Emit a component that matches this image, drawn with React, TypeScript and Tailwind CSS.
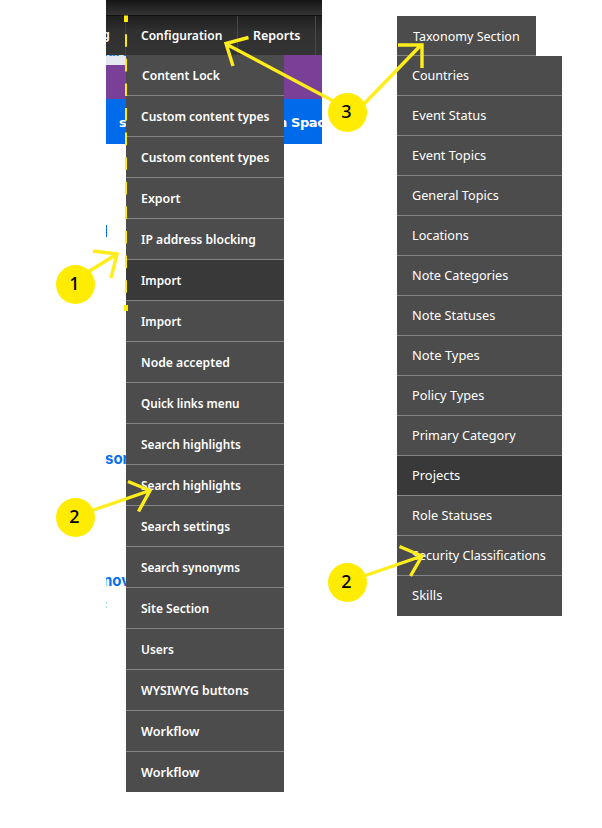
import { useLayoutEffect, useRef, useState } from "react";

type Item = { label: string; width: number; active?: boolean };

const configuration: Item[] = [
  { label: "Content Lock", width: 78 },
  { label: "Custom content types", width: 128 },
  { label: "Custom content types", width: 128 },
  { label: "Export", width: 40 },
  { label: "IP address blocking", width: 114.5 },
  { label: "Import", width: 40, active: true },
  { label: "Import", width: 40 },
  { label: "Node accepted", width: 89 },
  { label: "Quick links menu", width: 99 },
  { label: "Search highlights", width: 100 },
  { label: "Search highlights", width: 100 },
  { label: "Search settings", width: 89 },
  { label: "Search synonyms", width: 99 },
  { label: "Site Section", width: 68.5 },
  { label: "Users", width: 33 },
  { label: "WYSIWYG buttons", width: 108 },
  { label: "Workflow", width: 59 },
  { label: "Workflow", width: 59 },
];

const taxonomy: Item[] = [
  { label: "Countries", width: 57 },
  { label: "Event Status", width: 74 },
  { label: "Event Topics", width: 74 },
  { label: "General Topics", width: 86.5 },
  { label: "Locations", width: 56.5 },
  { label: "Note Categories", width: 96.5 },
  { label: "Note Statuses", width: 83.5 },
  { label: "Note Types", width: 67.5 },
  { label: "Policy Types", width: 72.5 },
  { label: "Primary Category", width: 104 },
  { label: "Projects", width: 48.5, active: true },
  { label: "Role Statuses", width: 80.5 },
  { label: "Security Classifications", width: 133.5 },
  { label: "Skills", width: 30 },
];

// A single-line label whose glyphs are condensed or widened to its given width.
function Label({ text, width }: { text: string; width: number }) {
  const ref = useRef<HTMLSpanElement>(null);
  const [scale, setScale] = useState(1);
  useLayoutEffect(() => {
    if (ref.current) setScale(width / ref.current.offsetWidth);
  }, [width]);
  return (
    <span
      ref={ref}
      className="inline-block origin-left whitespace-nowrap"
      style={{ transform: `scaleX(${scale})` }}
    >
      {text}
    </span>
  );
}

function Badge({ n, place }: { n: number; place: string }) {
  return (
    <div
      className={`absolute flex h-[39px] w-[39px] items-center justify-center rounded-full bg-[#ffec00] pr-0.5 pb-[3px] font-['Noto_Sans','Open_Sans',sans-serif] text-[18px] leading-none font-medium text-black ${place}`}
    >
      {n}
    </div>
  );
}

export default function App() {
  return (
    <div className="relative flex h-[828px] w-[602px] items-start overflow-hidden bg-white pl-[106px] font-['Noto_Sans','Open_Sans',sans-serif] text-[13px] text-white">
      <section className="w-[216px] shrink-0 overflow-hidden">
        <div className="h-[15px] bg-linear-to-b from-[#151515] to-[#353535]" />
        <nav className="flex h-10 items-center border-t border-[#111111] bg-linear-to-b from-[#1f1f1f] via-[#303030] via-40% to-[#343434] font-semibold">
          <div className="relative h-full w-5 overflow-hidden border-r border-[#414141]">
            <span className="absolute top-[9px] right-[15px]">g</span>
          </div>
          <div className="flex h-full w-[112px] items-center border-r border-[#484848] pl-[15px]">
            <Label text="Configuration" width={81.5} />
          </div>
          <div className="flex h-full w-[78px] items-center border-r border-[#484848] pl-[15px]">
            <Label text="Reports" width={47} />
          </div>
        </nav>
        <div className="flex">
          <aside className="h-[737px] w-5 shrink-0 overflow-hidden font-['Inter','Noto_Sans',sans-serif] text-[15px] font-bold text-[#0870ee]">
            <div className="h-[10px] overflow-hidden bg-[#e5e9ef]">
              <span className="-mt-[14px] -ml-1 block text-[14px] leading-5">ture</span>
            </div>
            <div className="h-[34px] bg-[#7a4098]" />
            <div className="flex h-[45px] items-center bg-[#006bea] pt-0.5 pl-[13px] font-['DejaVu_Sans',sans-serif] text-[13px] text-white">s</div>
            <div className="mt-[81px] h-3 w-px bg-[#0070f0]" />
            <div className="mt-[209px] flex h-6 items-center pt-0.5 whitespace-nowrap">
              <span className="-ml-px">some</span>
            </div>
            <div className="mt-[98px] flex h-6 items-center pt-0.5 whitespace-nowrap">
              <span className="-ml-[3px]">nov</span>
            </div>
            <div className="mt-[10px] flex h-1.5 w-px flex-col justify-between">
              <i className="h-0.5 bg-[#a5dcf5]" />
              <i className="h-0.5 bg-[#a5dcf5]" />
            </div>
          </aside>
          <ul className="h-[737px] w-[158px] shrink-0 overflow-hidden bg-[#4c4c4c] font-semibold">
            {configuration.map((item, i) => (
              <li
                key={i}
                className={`flex h-[41px] items-center border-b border-[#858585] pt-0.5 ${i === 0 ? "pl-4" : "pl-[15px]"} ${item.active ? "bg-[#393939]" : ""}`}
              >
                <Label text={item.label} width={item.width} />
              </li>
            ))}
          </ul>
          <div className="w-[38px] overflow-hidden">
            <div className="h-11 bg-[#7a4098]" />
            <div className="flex h-[45px] items-center bg-[#006bea] pt-0.5 font-['DejaVu_Sans',sans-serif] text-[13px] font-bold whitespace-nowrap">
              <span className="-ml-[6px] tracking-[-0.4px]">n Space</span>
            </div>
          </div>
        </div>
      </section>

      <section className="mt-4 ml-[75px] w-[165px]">
        <div className="flex h-10 w-[139px] items-center border-b border-[#858585] bg-[#4c4c4c] pt-0.5 pl-4">
          <Label text="Taxonomy Section" width={107} />
        </div>
        <ul className="bg-[#4c4c4c]">
          {taxonomy.map((item) => (
            <li
              key={item.label}
              className={`flex h-10 items-center border-b border-[#858585] pl-[15px] last:border-[#4c4c4c] ${item.active ? "bg-[#393939]" : ""}`}
            >
              <Label text={item.label} width={item.width} />
            </li>
          ))}
        </ul>
      </section>

      <svg className="pointer-events-none absolute inset-0" width="602" height="828" fill="none" stroke="#ffed1b" strokeWidth="3.4">
        <path d="M126 15.5V22" stroke="#ffed00" strokeWidth="4" />
        <path d="M126 34.2V294" stroke="#ffed00" strokeWidth="2" strokeDasharray="12.6 12" />
        <path d="M126 305V311" stroke="#ffed00" strokeWidth="4" />
        <path d="M337 103L226 44M248.500 37.500L226 43.500L233 66" />
        <path d="M364 104L421 45M398 45H422V68" />
        <path d="M88 272L117 254M93 251L117 254L111 278" />
        <path d="M92 510.500L150 490.500M128 481.500L150 490.500L138.500 511.500" />
        <path d="M364 576L422 556M399.500 546.500L422 556L410.500 576" />
      </svg>
      <Badge n={1} place="left-14 top-[265px]" />
      <Badge n={2} place="left-14 top-[498px]" />
      <Badge n={3} place="left-[328px] top-[93px]" />
      <Badge n={2} place="left-[328px] top-[563px]" />
    </div>
  );
}
